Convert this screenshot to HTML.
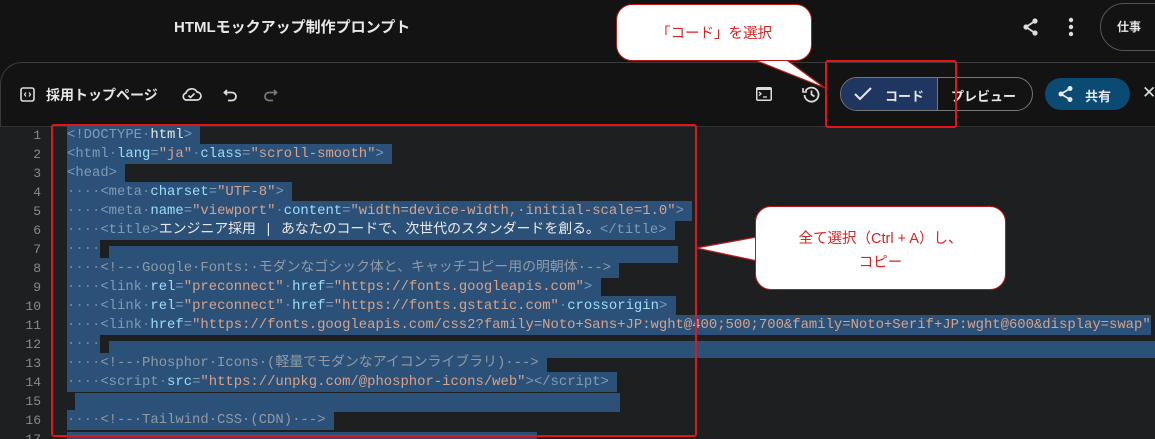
<!DOCTYPE html>
<html><head><meta charset="utf-8"><style>
*{margin:0;padding:0;box-sizing:border-box}
html,body{width:1155px;height:439px;overflow:hidden}
body{background:#131313;font-family:"Liberation Sans","Noto Sans CJK JP",sans-serif;color:#e3e3e3;position:relative}
.abs{position:absolute}
.title{left:174px;top:16px;font-size:15px;font-weight:bold;color:#e8e8e8}
.panel{left:0;top:62px;width:1155px;height:377px;border-top:1px solid #3a3a3a;border-left:1px solid #3a3a3a;border-top-left-radius:22px;background:#131313}
.editor{left:0;top:126px;width:1155px;height:313px;background:#1e1f20;border-top:1px solid #333}
.ln{position:absolute;left:0;width:41px;text-align:right;font-family:"Liberation Mono",monospace;font-size:13px;color:#8a8a8a;line-height:16px}
.code{position:absolute;left:67px;font-family:"Liberation Mono","Noto Sans CJK JP",monospace;font-size:13.9px;white-space:pre;line-height:19px}
.code span.s{background:#2b5178;padding:2px 0}
.t{color:#7f9bb8}.a{color:#9cdcfe}.v{color:#d6a38c}.w{color:#e8e8e8}.c{color:#8f9aa6}.d{color:#6f8aa5}
.blk{position:absolute;background:#2b5178}
.red{position:absolute;border:2.5px solid #e0161b;border-radius:3px}
.bub{position:absolute;background:#fff;border:1.5px solid #b91a1a;border-radius:16px;color:#d22;text-align:center;font-size:14.5px}
</style></head><body>
<div class="abs title">HTMLモックアップ制作プロンプト</div>
<svg class="abs" style="left:1022px;top:17px" width="18" height="20" viewBox="0 0 18 20"><g fill="#ddd"><circle cx="13" cy="4" r="2.6"/><circle cx="4" cy="10" r="2.6"/><circle cx="13" cy="16" r="2.6"/></g><path d="M13 4L4 10L13 16" stroke="#ddd" stroke-width="1.8" fill="none"/></svg>
<svg class="abs" style="left:1068px;top:17px" width="6" height="20"><g fill="#ddd"><circle cx="3" cy="3" r="2.2"/><circle cx="3" cy="10" r="2.2"/><circle cx="3" cy="17" r="2.2"/></g></svg>
<div class="abs" style="left:1100px;top:3px;width:80px;height:48px;border:1px solid #555;border-radius:24px;font-size:12px;padding:14px 0 0 16px;font-weight:bold">仕事</div>
<div class="abs panel"></div>
<svg class="abs" style="left:20px;top:87px" width="15" height="15"><rect x="1" y="1" width="13" height="13" rx="2" fill="none" stroke="#ddd" stroke-width="1.6"/><path d="M6 5.5L4.5 7.5L6 9.5M9 5.5L10.5 7.5L9 9.5" stroke="#ddd" stroke-width="1.2" fill="none"/></svg>
<div class="abs" style="left:46px;top:85px;font-size:14px;font-weight:bold;color:#e6e6e6">採用トップページ</div>
<svg class="abs" style="left:181px;top:86px" width="22" height="16"><path d="M5 14h11a4 4 0 0 0 0-8 6 6 0 0 0-11 1 3.6 3.6 0 0 0 0 7z" fill="none" stroke="#ddd" stroke-width="1.7"/><path d="M7.5 9.5l2 2 4-4" stroke="#ddd" stroke-width="1.6" fill="none"/></svg>
<svg class="abs" style="left:223px;top:87px" width="16" height="15"><path d="M4 3L1.5 5.5L4 8M2 5.5h7a4 4 0 0 1 0 8H5" stroke="#ddd" stroke-width="1.8" fill="none"/></svg>
<svg class="abs" style="left:262px;top:87px" width="16" height="15"><path d="M12 3l2.5 2.5L12 8M14 5.5H7a4 4 0 0 0 0 8h4" stroke="#777" stroke-width="1.8" fill="none"/></svg>
<svg class="abs" style="left:755px;top:86px" width="18" height="16"><rect x="1" y="1" width="16" height="14" rx="2" fill="#ddd"/><rect x="2.5" y="4" width="13" height="9.5" fill="#131313"/><path d="M4 6l2 1.8L4 9.6M8 11h4" stroke="#ddd" stroke-width="1.3" fill="none"/></svg>
<svg class="abs" style="left:802px;top:85px" width="18" height="18"><path d="M3.5 6A7 7 0 1 1 2.5 10" stroke="#ddd" stroke-width="1.8" fill="none"/><path d="M1 3v4h4" stroke="#ddd" stroke-width="1.6" fill="none"/><path d="M9.5 5.5v4l3 2" stroke="#ddd" stroke-width="1.7" fill="none"/></svg>
<div class="abs" style="left:840px;top:77px;width:193px;height:34px;border:1px solid #777;border-radius:17px;overflow:hidden">
<div class="abs" style="left:0;top:0;width:97px;height:34px;background:#1f3660;border-right:1px solid #777"></div>
<svg class="abs" style="left:13px;top:9px" width="18" height="14"><path d="M1 7l5 5L17 1" stroke="#e8e8e8" stroke-width="2" fill="none"/></svg>
<div class="abs" style="left:44px;top:8px;font-size:13px;font-weight:bold;color:#e8e8e8">コード</div>
<div class="abs" style="left:110px;top:8px;font-size:13px;font-weight:bold;color:#e8e8e8">プレビュー</div>
</div>
<div class="abs" style="left:1045px;top:78px;width:85px;height:32px;border-radius:16px;background:#0b4a73"></div>
<svg class="abs" style="left:1057px;top:85px" width="18" height="18"><g fill="#e8e8e8"><circle cx="13" cy="3.5" r="2.5"/><circle cx="4" cy="9" r="2.5"/><circle cx="13" cy="14.5" r="2.5"/></g><path d="M13 3.5L4 9L13 14.5" stroke="#e8e8e8" stroke-width="1.8" fill="none"/></svg>
<div class="abs" style="left:1085px;top:86px;font-size:13px;font-weight:bold;color:#e8e8e8">共有</div>
<div class="abs" style="left:1142px;top:83px;font-size:17px;color:#ddd">✕</div>

<div class="abs editor"></div>
<div class="ln" style="top:128px">1</div><div class="ln" style="top:147px">2</div><div class="ln" style="top:166px">3</div><div class="ln" style="top:185px">4</div><div class="ln" style="top:204px">5</div><div class="ln" style="top:223px">6</div><div class="ln" style="top:242px">7</div><div class="ln" style="top:261px">8</div><div class="ln" style="top:280px">9</div><div class="ln" style="top:299px">10</div><div class="ln" style="top:318px">11</div><div class="ln" style="top:337px">12</div><div class="ln" style="top:356px">13</div><div class="ln" style="top:375px">14</div><div class="ln" style="top:394px">15</div><div class="ln" style="top:413px">16</div><div class="ln" style="top:432px;height:7px;overflow:hidden">17</div>
<div class="blk" style="left:109px;top:246px;width:569px;height:17px"></div>
<div class="blk" style="left:109px;top:341px;width:1046px;height:17px"></div>
<div class="blk" style="left:75px;top:393px;width:545px;height:19px"></div>
<div class="blk" style="left:67px;top:432px;width:470px;height:7px"></div>
<div class="code" style="top:126px"><span class="s"><span class="t">&lt;!DOCTYPE</span><span class="d">·</span><span class="w">html</span><span class="t">&gt;</span> </span></div>
<div class="code" style="top:145px"><span class="s"><span class="t">&lt;html</span><span class="d">·</span><span class="a">lang</span><span class="t">=</span><span class="v">"ja"</span><span class="d">·</span><span class="a">class</span><span class="t">=</span><span class="v">"scroll-smooth"</span><span class="t">&gt;</span> </span></div>
<div class="code" style="top:164px"><span class="s"><span class="t">&lt;head&gt;</span> </span></div>
<div class="code" style="top:183px"><span class="s"><span class="d">····</span><span class="t">&lt;meta</span><span class="d">·</span><span class="a">charset</span><span class="t">=</span><span class="v">"UTF-8"</span><span class="t">&gt;</span> </span></div>
<div class="code" style="top:202px"><span class="s"><span class="d">····</span><span class="t">&lt;meta</span><span class="d">·</span><span class="a">name</span><span class="t">=</span><span class="v">"viewport"</span><span class="d">·</span><span class="a">content</span><span class="t">=</span><span class="v">"width=device-width,·initial-scale=1.0"</span><span class="t">&gt;</span> </span></div>
<div class="code" style="top:221px"><span class="s"><span class="d">····</span><span class="t">&lt;title&gt;</span><span class="w">エンジニア採用 | あなたのコードで、次世代のスタンダードを創る。</span><span class="t">&lt;/title&gt;</span> </span></div>
<div class="code" style="top:240px"><span class="s"><span class="d">····</span></span></div>
<div class="code" style="top:259px"><span class="s"><span class="d">····</span><span class="c">&lt;!--·Google·Fonts:·モダンなゴシック体と、キャッチコピー用の明朝体·--&gt;</span> </span></div>
<div class="code" style="top:278px"><span class="s"><span class="d">····</span><span class="t">&lt;link</span><span class="d">·</span><span class="a">rel</span><span class="t">=</span><span class="v">"preconnect"</span><span class="d">·</span><span class="a">href</span><span class="t">=</span><span class="v">"https://fonts.googleapis.com"</span><span class="t">&gt;</span> </span></div>
<div class="code" style="top:297px"><span class="s"><span class="d">····</span><span class="t">&lt;link</span><span class="d">·</span><span class="a">rel</span><span class="t">=</span><span class="v">"preconnect"</span><span class="d">·</span><span class="a">href</span><span class="t">=</span><span class="v">"https://fonts.gstatic.com"</span><span class="d">·</span><span class="a">crossorigin</span><span class="t">&gt;</span> </span></div>
<div class="code" style="top:316px"><span class="s"><span class="d">····</span><span class="t">&lt;link</span><span class="d">·</span><span class="a">href</span><span class="t">=</span><span class="v">"https://fonts.googleapis.com/css2?family=Noto+Sans+JP:wght@400;500;700&amp;family=Noto+Serif+JP:wght@600&amp;display=swap"</span></span></div>
<div class="code" style="top:335px"><span class="s"><span class="d">····</span></span></div>
<div class="code" style="top:354px"><span class="s"><span class="d">····</span><span class="c">&lt;!--·Phosphor·Icons·(軽量でモダンなアイコンライブラリ)·--&gt;</span> </span></div>
<div class="code" style="top:373px"><span class="s"><span class="d">····</span><span class="t">&lt;script</span><span class="d">·</span><span class="a">src</span><span class="t">=</span><span class="v">"https://unpkg.com/@phosphor-icons/web"</span><span class="t">&gt;&lt;/script&gt;</span> </span></div>
<div class="code" style="top:411px"><span class="s"><span class="d">····</span><span class="c">&lt;!--·Tailwind·CSS·(CDN)·--&gt;</span> </span></div>

<div class="red" style="left:51px;top:124px;width:646px;height:313px"></div>
<div class="red" style="left:825px;top:60px;width:132px;height:68px"></div>
<svg class="abs" style="left:740px;top:55px" width="90" height="35"><path d="M2 0L85 33L40 0" fill="#fff" stroke="#b91a1a" stroke-width="1.2"/><path d="M2 -1L40 -1" stroke="#fff" stroke-width="3"/></svg>
<div class="bub" style="left:616px;top:4px;width:196px;height:57px;padding-top:17px">「コード」を選択</div>
<svg class="abs" style="left:694px;top:232px" width="70" height="36"><path d="M68 4L2 16L68 30" fill="#fff" stroke="#b91a1a" stroke-width="1.2"/></svg>
<div class="bub" style="left:755px;top:206px;width:251px;height:84px;padding-top:20px;line-height:24px">全て選択（Ctrl + A）し、<br>コピー</div>
</body></html>
